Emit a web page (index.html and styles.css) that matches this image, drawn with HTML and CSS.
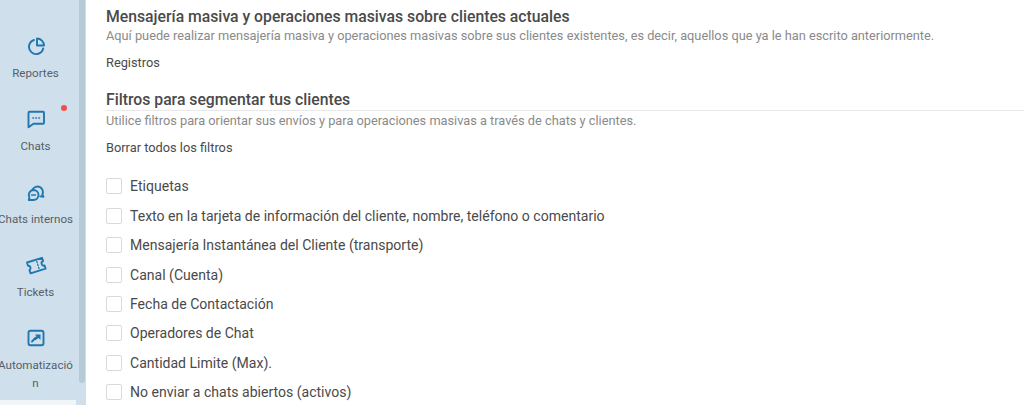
FILE: index.html
```html
<!DOCTYPE html>
<html lang="es">
<head>
<meta charset="utf-8">
<title>Mensajería masiva</title>
<link rel="stylesheet" href="styles.css">
</head>
<body>
<div class="app">
  <nav class="sidebar">
    <div class="nav-list">
      <a class="nav-item">
        <svg class="nav-icon" viewBox="0 0 20 20"><path d="M8 4a7.200 7.200 0 1 0 9.200 8.500"/><path d="M11 2.500v7h7a7 7 0 0 0-7-7z"/></svg>
        <span class="nav-label">Reportes</span>
      </a>
      <a class="nav-item">
        <svg class="nav-icon" viewBox="0 0 20 20"><path d="M2.500 3.800q0-1 1-1h13.500q1 0 1 1v10q0 1-1 1H7.500l-5 3.500z"/><path class="dots" d="M6.800 9h.8M9.800 9h.8M12.800 9h.8"/></svg>
        <span class="nav-label">Chats</span>
        <span class="badge"></span>
      </a>
      <a class="nav-item">
        <svg class="nav-icon" viewBox="0 0 20 20"><path d="M7.500 8a5 5 0 1 1 0 10H2.800l.6-2.600A5 5 0 0 1 7.500 8z"/><path d="M6.500 7.500a5.300 5.300 0 1 1 9.800 5.200l1.200 2-3.200-.3"/><path class="dots" d="M5.500 13h4"/></svg>
        <span class="nav-label">Chats internos</span>
      </a>
      <a class="nav-item">
        <svg class="nav-icon ticket" viewBox="0 0 20 20"><path d="M1 7.500 16 2.800l1.100 3.300a2.300 2.300 0 0 0 1.500 4.400l1 3.200L4.600 18.400l-1.100-3.300A2.400 2.400 0 0 0 2 10.700z"/><path class="dots" d="M10.800 6.500l.4 1.300M11.700 9.400l.4 1.300M12.600 12.300l.4 1.300"/></svg>
        <span class="nav-label">Tickets</span>
      </a>
      <a class="nav-item">
        <svg class="nav-icon" viewBox="0 0 20 20"><rect x="2.500" y="2.800" width="15" height="14.500" rx="2"/><path d="M6 13.500 9.500 10"/><path class="fill" d="M9 6.500h5.500V12l-2-2-3 2.200-2-2 3-2z"/></svg>
        <span class="nav-label">Automatización</span>
      </a>
    </div>
    <div class="scrollbar"></div>
    <div class="nav-bottom"></div>
  </nav>
  <main class="content">
    <h1 class="title">Mensajería masiva y operaciones masivas sobre clientes actuales</h1>
    <p class="hint">Aquí puede realizar mensajería masiva y operaciones masivas sobre sus clientes existentes, es decir, aquellos que ya le han escrito anteriormente.</p>
    <a class="link">Registros</a>
    <h2 class="title title-rule">Filtros para segmentar tus clientes</h2>
    <p class="hint">Utilice filtros para orientar sus envíos y para operaciones masivas a través de chats y clientes.</p>
    <a class="link">Borrar todos los filtros</a>
    <ul class="filters">
      <li class="filter"><span class="box"></span>Etiquetas</li>
      <li class="filter"><span class="box"></span>Texto en la tarjeta de información del cliente, nombre, teléfono o comentario</li>
      <li class="filter"><span class="box"></span>Mensajería Instantánea del Cliente (transporte)</li>
      <li class="filter"><span class="box"></span>Canal (Cuenta)</li>
      <li class="filter"><span class="box"></span>Fecha de Contactación</li>
      <li class="filter"><span class="box"></span>Operadores de Chat</li>
      <li class="filter"><span class="box"></span>Cantidad Limite (Max).</li>
      <li class="filter"><span class="box"></span>No enviar a chats abiertos (activos)</li>
    </ul>
  </main>
</div>
</body>
</html>
```
FILE: styles.css
```css
* { box-sizing: border-box; }
html, body { margin: 0; height: 100%; overflow: hidden; }
body { font-family: Roboto, "Liberation Sans", sans-serif; background: #fff; color: #444; }
.app { display: flex; height: 405px; overflow: hidden; }
.sidebar { position: relative; width: 86px; flex: none; background: #cfe0ec; padding-top: 36px; }
.nav-list { width: 71px; display: flex; flex-direction: column; }
.nav-item { position: relative; display: flex; flex-direction: column; align-items: center; height: 73px; }
.nav-icon { width: 20px; height: 20px; flex: none; fill: none; stroke: #1f77ad; stroke-width: 1.900; stroke-linejoin: round; stroke-linecap: round; }
.nav-icon .fill { fill: #1f77ad; stroke: none; }
.nav-icon .dots { stroke-width: 1.300; }
.ticket { width: 22px; }
.nav-label { margin-top: 8px; font-size: 11.600px; line-height: 18px; color: #555f68; text-align: center; width: 78px; flex: none; overflow-wrap: anywhere; }
.badge { position: absolute; top: -4px; left: 61px; width: 6px; height: 6px; border-radius: 50%; background: #f44b4b; }
.scrollbar { position: absolute; top: 0; left: 79px; width: 6px; height: 383px; background: #b5c9d6; border-radius: 0 0 3px 3px; }
.nav-bottom { position: absolute; left: 0; top: 400px; width: 76px; height: 5px; background: #f0f5f8; }
.content { flex: 1; min-width: 0; padding: 8px 0 0 20px; }
.title { margin: 0; font-size: 15.750px; line-height: 18px; font-weight: 500; color: #4a4a4a; }
.title-rule { margin-top: 19px; border-bottom: 1px solid #e8e8e8; padding-bottom: 1px; }
.hint { margin: 1px 0 0; font-size: 12.770px; line-height: 18px; color: #8a8a8a; }
.link { display: block; margin-top: 9px; font-size: 12.800px; line-height: 18px; color: #4a4a4a; }
.filters { list-style: none; margin: 14.700px 0 0; padding: 0; }
.filter { display: flex; align-items: center; height: 29.400px; font-size: 14.050px; color: #4a4a4a; }
.box { width: 16px; height: 16px; margin-right: 8px; border: 1px solid #d9d9d9; border-radius: 2px; background: #fff; flex: none; }
```
